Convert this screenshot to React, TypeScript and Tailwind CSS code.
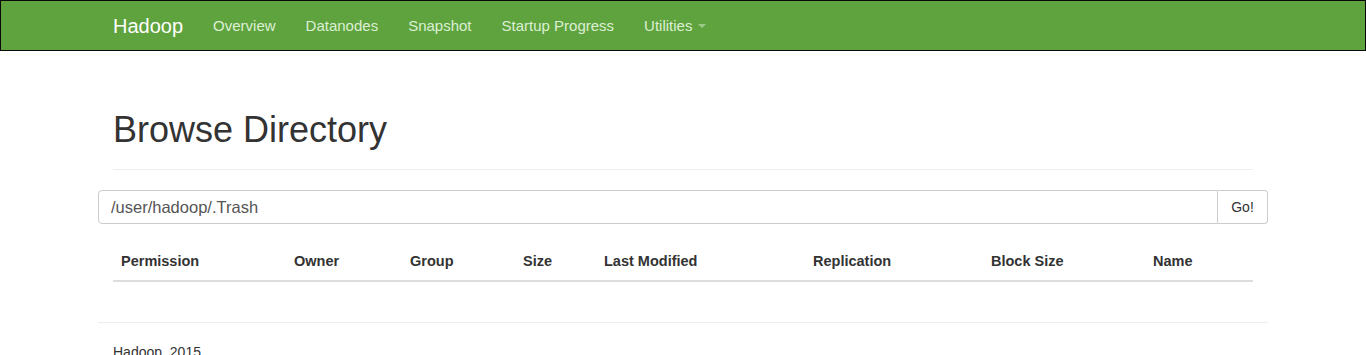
import React from "react";

const cols: { label: string; w: number }[] = [
  { label: "Permission", w: 173 },
  { label: "Owner", w: 116 },
  { label: "Group", w: 113 },
  { label: "Size", w: 81 },
  { label: "Last Modified", w: 209 },
  { label: "Replication", w: 178 },
  { label: "Block Size", w: 162 },
  { label: "Name", w: 108 },
];

export default function App() {
  return (
    <div className="min-h-[355px] bg-white text-[#333] text-[14px] leading-[20px]" style={{ fontFamily: '"Liberation Sans", Arial, sans-serif' }}>
      <nav className="h-[51px] bg-[#5fa33e] border border-[#080808]">
        <div className="w-[1170px] mx-auto flex items-center h-[49px]">
          <span className="px-[15px] text-[20px] text-white leading-[20px]">Hadoop</span>
          <ul className="flex items-center text-[15px] text-[#dcefd4]">
            <li className="px-[15px]">Overview</li>
            <li className="px-[15px]">Datanodes</li>
            <li className="px-[15px]">Snapshot</li>
            <li className="px-[15px]">Startup Progress</li>
            <li className="px-[15px] flex items-center">
              Utilities
              <span className="ml-[6px] inline-block w-0 h-0 border-l-[4px] border-r-[4px] border-t-[4px] border-l-transparent border-r-transparent border-t-[#9fc98c]" />
            </li>
          </ul>
        </div>
      </nav>
      <div className="w-[1170px] mx-auto">
        <div className="mx-[15px] mt-[59px] mb-[20px] pb-[9px] border-b border-[#eee]">
          <h1 className="text-[36px] leading-[39.6px] mb-[10px] text-[#333] font-normal">Browse Directory</h1>
        </div>
        <div className="flex h-[34px]">
          <div className="flex-1 border border-[#ccc] rounded-l-[4px] px-[12px] flex items-center text-[16.5px] text-[#555]">/user/hadoop/.Trash</div>
          <div className="w-[50px] border border-l-0 border-[#ccc] rounded-r-[4px] flex items-center justify-center text-[#333]">Go!</div>
        </div>
        <div className="mx-[15px] mt-[20px]">
          <div className="flex border-b-2 border-[#ddd] h-[38px]">
            {cols.map((c) => (
              <div key={c.label} className="px-[8px] pt-[7px] font-bold text-[14.5px] leading-[21px]" style={{ width: c.w }}>
                {c.label}
              </div>
            ))}
          </div>
        </div>
        <div className="mt-[40px] border-t border-[#eee]" />
        <div className="px-[15px] pt-[19px] text-[14px]">Hadoop, 2015.</div>
      </div>
    </div>
  );
}
